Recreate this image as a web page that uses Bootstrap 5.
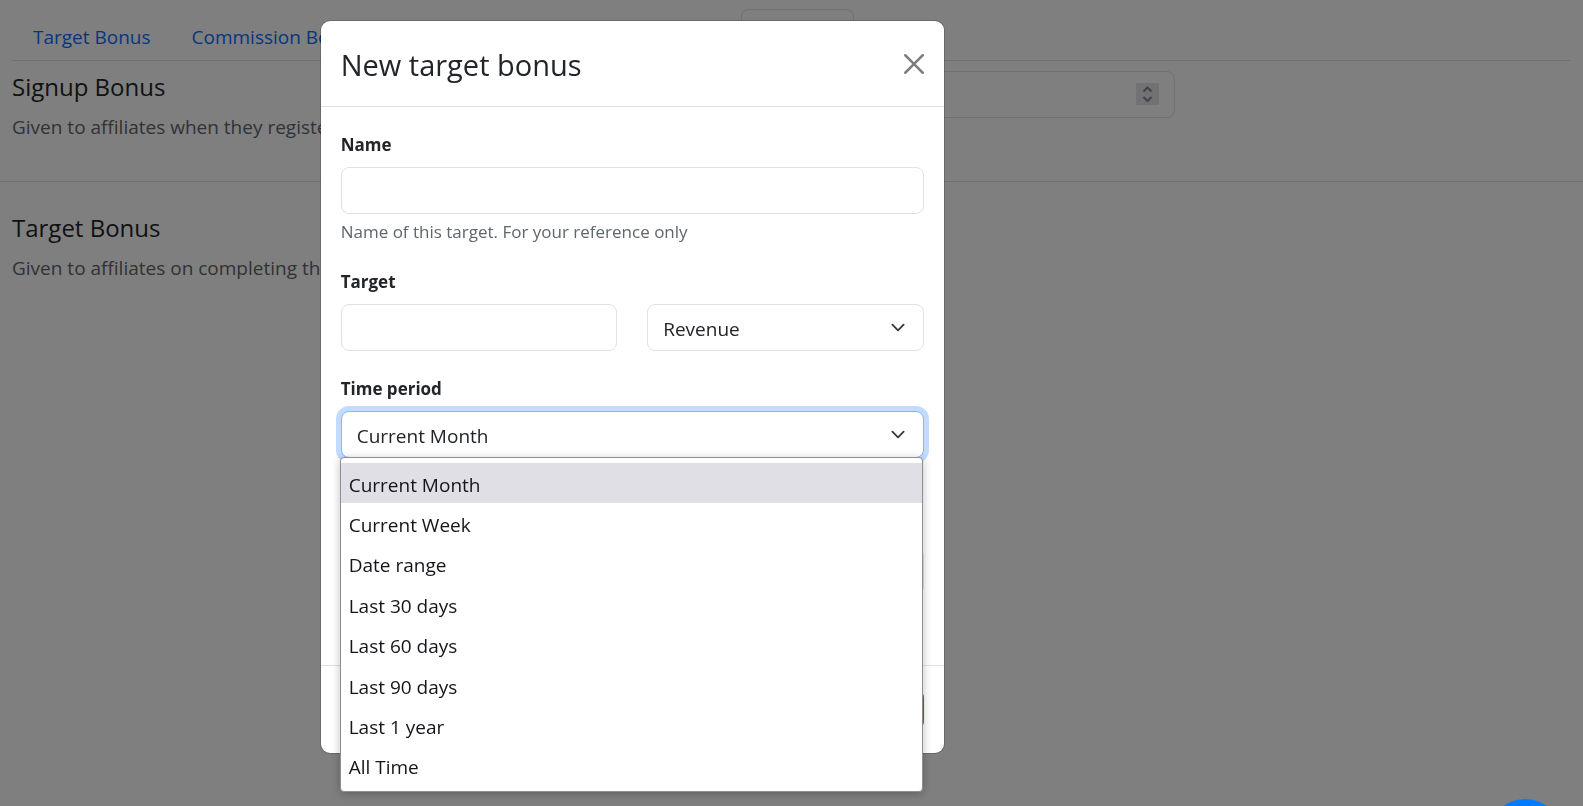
<!DOCTYPE html>
<html lang="en">
<head>
<meta charset="utf-8">
<meta name="viewport" content="width=device-width, initial-scale=1">
<title>Target Bonus</title>
<link href="https://cdn.jsdelivr.net/npm/bootstrap@5.3.0/dist/css/bootstrap.min.css" rel="stylesheet">
<style>
  html { font-size: 20px; }
  body { font-family: "Open Sans", "Segoe UI", sans-serif; font-size: 19px; line-height: 30px; color: #212529; }

  /* Page behind the dialog */
  .page { --bs-gutter-x: 24px; padding-top: 9px; }
  .page .row { --bs-gutter-x: 24px; }
  .nav-tabs .nav-link { padding: 12px 19px 8px 20px; font-size: 19px; line-height: 30px; color: #0d6efd; }
  .nav-tabs .nav-link.active { width: 113px; margin-left: auto; color: #495057; background: #fff; }
  .tab-strip { width: 842px; flex-wrap: nowrap; }
  .section-title { font-size: 24px; line-height: 30px; margin: 0 0 10px; }
  .section-block { padding-top: 10px; min-height: 110px; }
  .section-text { padding-top: 1px; }
  .section-note { color: #5f666d; margin: 0; }
  .rule { margin: 10px -12px 0; border-top: 1px solid #dee2e6; opacity: 1; }

  .form-control, .form-select { height: 47px; font-size: 19px; line-height: 30px; padding: 8px 15px; border-radius: 8px; }
  .form-select { padding: 9px 40px 6px 15px; background-position: right 17px center; background-size: 16px 15px; }
  .form-select.open { border-color: #86b7fe; box-shadow: 0 0 0 5px #c2dbfe; }
  input[type=number]::-webkit-inner-spin-button { -webkit-appearance: none; margin: 0; }
  .spin { position: absolute; right: 16px; top: 12px; width: 23px; height: 22px; background: #e4e4ea; }

  /* Dialog */
  .modal { width: calc(80% - 2px); }
  .modal-backdrop { --bs-backdrop-opacity: .5; }
  .modal-dialog { max-width: 625px; margin-top: 20px; margin-bottom: 20px; }
  .modal-content { border-radius: 10px; }
  .modal-header { padding: 20px; border-color: #dee2e6; }
  .modal-title { padding-top: 2px; font-size: 29px; line-height: 43px; font-weight: 400; }
  .modal-header .btn-close { padding: 10px; margin: 0 -10px 0 auto; background-size: 20px 20px; }
  .modal-body { padding: 20px; }
  .modal-footer { padding: 24px 20px; border-color: #dee2e6; }
  .modal-footer .btn { min-width: 90px; height: 39px; margin: 0; padding: 0 15px; font-size: 19px; }
  .form-label { display: block; margin: 0; height: 40px; line-height: 36px; font-size: 17px; font-weight: 700; }
  .form-text { margin: 5px 0 0; font-size: 17px; line-height: 25px; color: #5f666d; }
  .field { margin-bottom: 20px; }
  .field-noted { padding-bottom: 30px; }
  .field-unlabelled { padding-top: 40px; }

  /* Open list of the time period select */
  .options { position: absolute; top: 100%; left: -1px; right: 1px; z-index: 5; height: 335px; margin: -1px 0 0; padding: 5px 0;
    background: #fff; border: 1px solid #8f8f93; border-radius: 4px; box-shadow: 0 2px 10px rgba(0, 0, 0, .25); }
  .options button { flex: 1; border: 0; background: none; padding: 3px 8px 0; text-align: left; color: #15141a; }
  .options button.current { background: #e0dfe5; }

  .chat { position: fixed; right: 21px; bottom: -67px; width: 74px; height: 74px; z-index: 1080; border: 0; border-radius: 50%; background: #007bff; }
</style>
</head>
<body class="modal-open overflow-hidden">

<main class="container-fluid page">
  <nav class="border-bottom">
    <div class="nav nav-tabs border-0 tab-strip">
      <a class="nav-link" href="#target">Target Bonus</a>
      <a class="nav-link text-nowrap" href="#commission">Commission Bonus</a>
      <a class="nav-link active" href="#bonus" aria-label="Bonus"></a>
    </div>
  </nav>

  <section class="row section-block">
    <div class="col-6 section-text">
      <h2 class="section-title">Signup Bonus</h2>
      <p class="section-note">Given to affiliates when they register</p>
    </div>
    <div class="col-3">
      <div class="position-relative">
        <input type="number" class="form-control" aria-label="Signup bonus">
        <svg class="spin" viewBox="0 0 23 22" fill="none" stroke="#85858f" stroke-width="2" aria-hidden="true">
          <path d="M7.500 8.500 11.500 4.500l4 4M7.500 14l4 4 4-4"/>
        </svg>
      </div>
    </div>
  </section>
  <hr class="rule">
  <section class="row section-block pt-4">
    <div class="col-6 section-text">
      <h2 class="section-title">Target Bonus</h2>
      <p class="section-note">Given to affiliates on completing this</p>
    </div>
  </section>
</main>

<div class="modal-backdrop show"></div>
<div class="modal d-block" role="dialog" aria-modal="true" aria-labelledby="dialogTitle">
  <div class="modal-dialog">
    <form class="modal-content">
      <div class="modal-header">
        <h1 class="modal-title" id="dialogTitle">New target bonus</h1>
        <button type="button" class="btn-close" aria-label="Close"></button>
      </div>
      <div class="modal-body">
        <div class="field">
          <label class="form-label" for="name">Name</label>
          <input type="text" class="form-control" id="name">
          <div class="form-text">Name of this target. For your reference only</div>
        </div>
        <div class="field">
          <label class="form-label" for="target">Target</label>
          <div class="row">
            <div class="col"><input type="text" class="form-control" id="target"></div>
            <div class="col">
              <select class="form-select" aria-label="Target type"><option>Revenue</option></select>
            </div>
          </div>
        </div>
        <div class="field field-noted">
          <label class="form-label" for="period">Time period</label>
          <div class="position-relative">
            <select class="form-select open" id="period"><option>Current Month</option></select>
            <div class="options d-flex flex-column" role="listbox" aria-label="Time period">
              <button type="button" role="option" aria-selected="true" class="current">Current Month</button>
              <button type="button" role="option">Current Week</button>
              <button type="button" role="option">Date range</button>
              <button type="button" role="option">Last 30 days</button>
              <button type="button" role="option">Last 60 days</button>
              <button type="button" role="option">Last 90 days</button>
              <button type="button" role="option">Last 1 year</button>
              <button type="button" role="option">All Time</button>
            </div>
          </div>
        </div>
        <div class="field field-noted field-unlabelled">
          <input type="text" class="form-control" aria-label="Bonus">
        </div>
      </div>
      <div class="modal-footer">
        <button type="submit" class="btn btn-primary" aria-label="Save"></button>
      </div>
    </form>
  </div>
</div>

<button type="button" class="chat" aria-label="Chat"></button>

<script src="https://cdn.jsdelivr.net/npm/bootstrap@5.3.0/dist/js/bootstrap.bundle.min.js"></script>
</body>
</html>
